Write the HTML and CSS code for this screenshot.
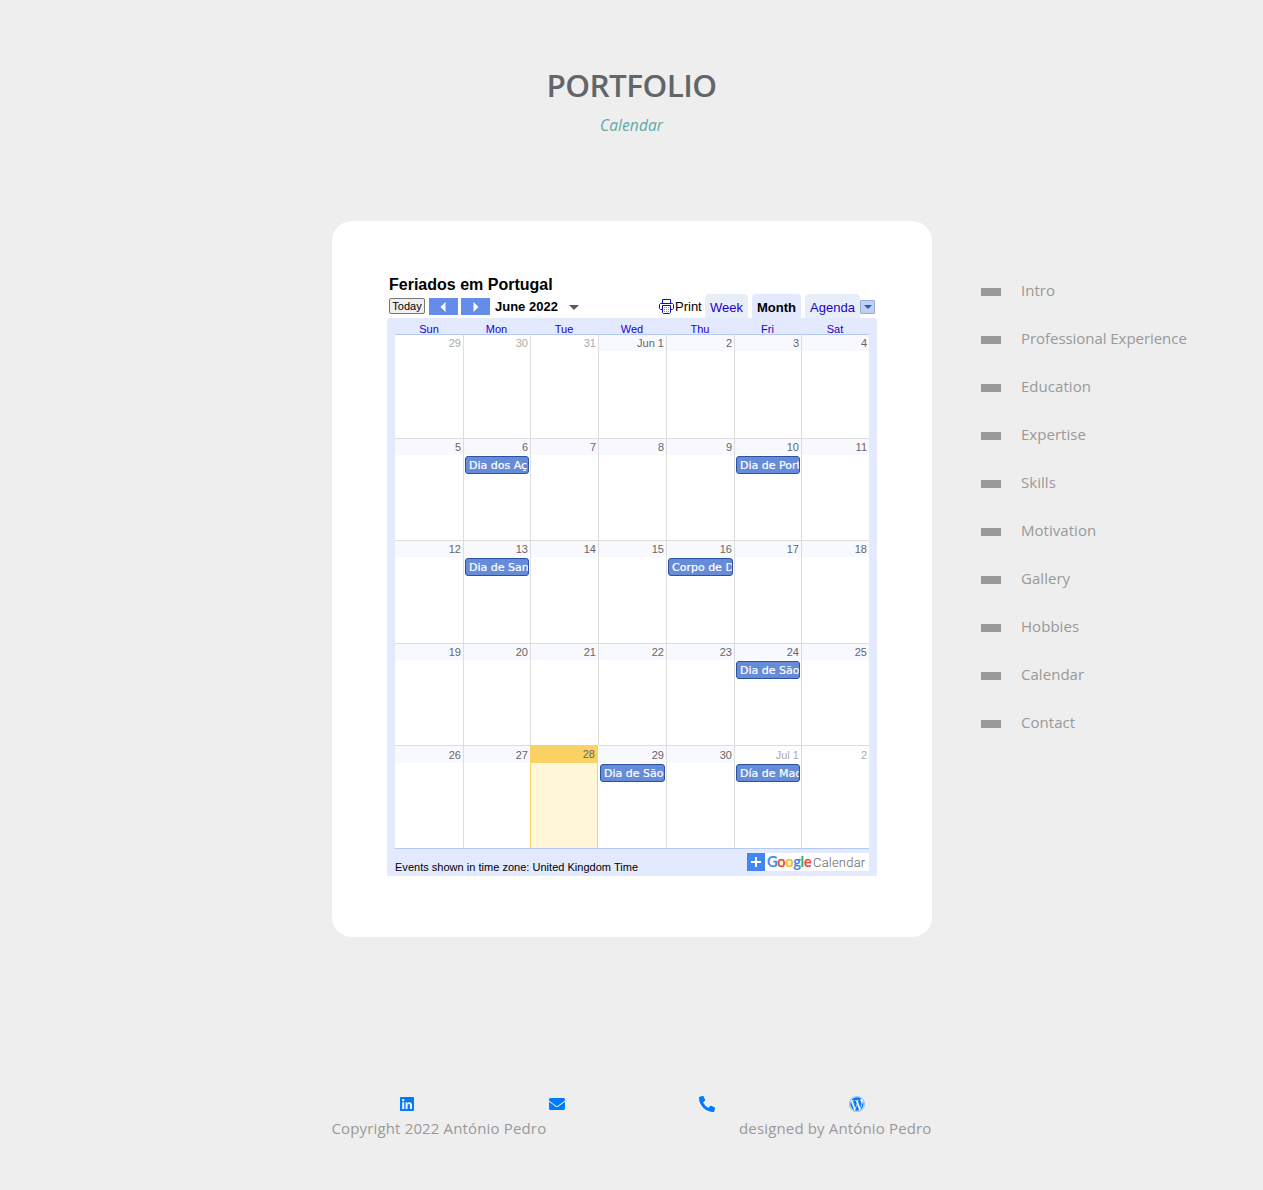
FILE: index.html
```html
<!DOCTYPE html>
<html lang="en">
<head>
<meta charset="utf-8">
<title>Portfolio - Calendar</title>
<link rel="stylesheet" href="styles.css">
</head>
<body>
<header class="heading">
  <h1>PORTFOLIO</h1>
  <p>Calendar</p>
</header>
<div class="page">
  <main class="card">
    <h2 class="cal-title">Feriados em Portugal</h2>
    <div class="toolbar">
      <button class="today-btn">Today</button>
      <span class="nav-btn"><svg width="6" height="10" viewBox="0 0 6 10"><path d="M5.5 0v10L.5 5z" fill="#fff"/></svg></span>
      <span class="nav-btn next"><svg width="6" height="10" viewBox="0 0 6 10"><path d="M.5 0v10l5-5z" fill="#fff"/></svg></span>
      <span class="month">June 2022</span>
      <svg class="caret" width="10" height="5" viewBox="0 0 10 5"><path d="M0 0h10L5 5z" fill="#595959"/></svg>
      <span class="print"><svg width="15" height="16" viewBox="0 0 15 16" fill="none" stroke="#1111b0"><path d="M3.500 4.500v-4h8v4M3 10.500H1.500l-1-1v-4l1-1h12l1 1v4l-1 1H12"/><path d="M3.500 6.500h8v7l-1 1h-6l-1-1z" fill="#fff"/><path d="M5 8.500h5M5 10.500h5M5 12.500h5" stroke="#8888bb" stroke-dasharray="1 1"/></svg>Print</span>
      <span class="tab week">Week</span>
      <span class="tab active">Month</span>
      <span class="tab agenda">Agenda</span>
      <span class="drop"><svg width="8" height="4" viewBox="0 0 8 4"><path d="M0 0h8L4 4z" fill="#2a56c6"/></svg></span>
    </div>
    <section class="calendar">
      <div class="grid days"><span>Sun</span><span>Mon</span><span>Tue</span><span>Wed</span><span>Thu</span><span>Fri</span><span>Sat</span></div>
      <div class="grid weeks">
        <div class="cell out"><b>29</b></div><div class="cell out"><b>30</b></div><div class="cell out"><b>31</b></div><div class="cell"><b>Jun 1</b></div><div class="cell"><b>2</b></div><div class="cell"><b>3</b></div><div class="cell"><b>4</b></div>
        <div class="cell"><b>5</b></div><div class="cell"><b>6</b><i>Dia dos Aç</i></div><div class="cell"><b>7</b></div><div class="cell"><b>8</b></div><div class="cell"><b>9</b></div><div class="cell"><b>10</b><i>Dia de Port</i></div><div class="cell"><b>11</b></div>
        <div class="cell"><b>12</b></div><div class="cell"><b>13</b><i>Dia de San</i></div><div class="cell"><b>14</b></div><div class="cell"><b>15</b></div><div class="cell"><b>16</b><i>Corpo de D</i></div><div class="cell"><b>17</b></div><div class="cell"><b>18</b></div>
        <div class="cell"><b>19</b></div><div class="cell"><b>20</b></div><div class="cell"><b>21</b></div><div class="cell"><b>22</b></div><div class="cell"><b>23</b></div><div class="cell"><b>24</b><i>Dia de São</i></div><div class="cell"><b>25</b></div>
        <div class="cell last"><b>26</b></div><div class="cell last"><b>27</b></div><div class="cell today"><b>28</b></div><div class="cell last after-today"><b>29</b><i>Dia de São</i></div><div class="cell last"><b>30</b></div><div class="cell last out"><b>Jul 1</b><i>Día de Mad</i></div><div class="cell last out"><b>2</b></div>
      </div>
      <div class="cal-foot">
        <span class="zone">Events shown in time zone: United Kingdom Time</span>
        <span class="badge"><svg width="18" height="18" viewBox="0 0 18 18"><path d="M0 0h18v18H0z" fill="#4285f4"/><path d="M9 4v10M4 9h10" stroke="#fff" stroke-width="2"/></svg><span class="google"><span class="g-blue">G</span><span class="g-red">o</span><span class="g-yellow">o</span><span class="g-blue">g</span><span class="g-green">l</span><span class="g-red">e</span></span><span class="product">Calendar</span></span>
      </div>
    </section>
  </main>
  <nav class="side">
    <a>Intro</a><a class="long">Professional Experience</a><a>Education</a><a>Expertise</a><a>Skills</a><a>Motivation</a><a>Gallery</a><a>Hobbies</a><a>Calendar</a><a>Contact</a>
  </nav>
</div>
<footer class="footer">
  <div class="icons">
    <span><svg width="14" height="16" viewBox="0 0 448 512"><path d="M416 32H31.900C14.300 32 0 46.500 0 64.300v383.400C0 465.500 14.300 480 31.900 480H416c17.600 0 32-14.500 32-32.300V64.300c0-17.800-14.400-32.300-32-32.300zM135.400 416H69V202.200h66.500V416zm-33.200-243c-21.300 0-38.500-17.300-38.500-38.500S80.900 96 102.200 96c21.200 0 38.500 17.300 38.500 38.500 0 21.300-17.200 38.500-38.500 38.500zm282.100 243h-66.400V312c0-24.800-.5-56.700-34.500-56.700-34.600 0-39.900 27-39.900 54.900V416h-66.400V202.200h63.700v29.200h.9c8.900-16.800 30.600-34.500 62.900-34.500 67.200 0 79.700 44.300 79.700 101.900V416z"/></svg></span>
    <span><svg width="16" height="16" viewBox="0 0 512 512"><path d="M502.300 190.800c3.900-3.100 9.700-.2 9.700 4.700V400c0 26.500-21.500 48-48 48H48c-26.500 0-48-21.500-48-48V195.600c0-5 5.700-7.800 9.700-4.700 22.400 17.400 52.100 39.500 154.100 113.600 21.100 15.400 56.700 47.800 92.200 47.600 35.700.3 72-32.800 92.300-47.600 102-74.100 131.600-96.300 154-113.700zM256 320c23.200.4 56.600-29.200 73.400-41.400 132.700-96.300 142.800-104.700 173.400-128.700 5.800-4.500 9.200-11.500 9.200-18.900v-19c0-26.500-21.500-48-48-48H48c-26.500 0-48 21.500-48 48v19c0 7.400 3.400 14.300 9.200 18.900 30.600 23.900 40.700 32.400 173.400 128.700 16.800 12.200 50.200 41.800 73.400 41.400z"/></svg></span>
    <span><svg width="16" height="16" viewBox="0 0 512 512"><path d="M497.390 361.800l-112-48a24 24 0 0 0-28 6.900l-49.600 60.600A370.660 370.660 0 0 1 130.600 204.110l60.600-49.600a23.940 23.940 0 0 0 6.900-28l-48-112A24.160 24.160 0 0 0 122.600.610l-104 24A24 24 0 0 0 0 48c0 256.500 207.900 464 464 464a24 24 0 0 0 23.400-18.600l24-104a24.290 24.290 0 0 0-14.010-27.600z"/></svg></span>
    <span><svg width="16" height="16" viewBox="0 0 512 512"><path d="M61.700 169.400l101.500 278C92.200 413 43.300 340.200 43.300 256c0-30.900 6.600-60.100 18.400-86.600zm337.900 75.900c0-26.300-9.400-44.500-17.500-58.700-10.800-17.500-20.900-32.400-20.900-49.900 0-19.600 14.800-37.800 35.700-37.800.9 0 1.800.1 2.800.2-37.900-34.700-88.300-55.900-143.700-55.900-74.300 0-139.700 38.100-177.800 95.900 5 .2 9.700.3 13.700.3 22.200 0 56.700-2.700 56.700-2.700 11.500-.7 12.800 16.200 1.400 17.500 0 0-11.500 1.300-24.300 2l77.500 230.400L249.800 247l-33.100-90.800c-11.500-.7-22.300-2-22.300-2-11.500-.7-10.100-18.200 1.300-17.500 0 0 35.100 2.700 56 2.700 22.200 0 56.700-2.700 56.700-2.700 11.500-.7 12.800 16.200 1.400 17.500 0 0-11.500 1.300-24.300 2l76.900 228.700 21.200-70.900c9-29.400 16-50.500 16-68.700zm-139.900 29.300l-63.800 185.500c19.100 5.600 39.200 8.700 60.100 8.700 24.800 0 48.500-4.300 70.600-12.100-.6-.9-1.100-1.900-1.500-2.900l-65.400-179.200zm183-120.700c.9 6.800 1.400 14 1.400 21.900 0 21.600-4 45.800-16.200 76.200l-65 187.900C426.200 403 468.700 334.500 468.700 256c0-37-9.400-71.800-26-102.100zM504 256c0 136.800-111.300 248-248 248C119.200 504 8 392.700 8 256 8 119.200 119.200 8 256 8c136.700 0 248 111.200 248 248zm-11.400 0c0-130.500-106.200-236.600-236.600-236.600C125.500 19.400 19.400 125.500 19.400 256S125.600 492.600 256 492.600c130.500 0 236.600-106.100 236.600-236.600z"/></svg></span>
  </div>
  <div class="credits"><span>Copyright 2022 António Pedro</span><span>designed by António Pedro</span></div>
</footer>
</body>
</html>
```
FILE: styles.css
```css
* { box-sizing: border-box; }
body {
  margin: 0;
  height: 1190px;
  overflow: hidden;
  background: #eee;
  color: #999;
  font: 15px/24px "Open Sans", "Noto Sans", sans-serif;
}
svg { display: block; flex: none; }
.heading { height: 221px; padding-top: 63px; text-align: center; }
.heading h1 { margin: 0; font-size: 31.500px; line-height: 43px; font-weight: 600; letter-spacing: -.6px; color: #636668; }
.heading p { margin: 7px 0 0; font-size: 15.500px; letter-spacing: .1px; font-style: italic; color: #5faaa9; }

.page { display: grid; grid-template-columns: 600px 1fr; column-gap: 49px; padding-left: 332px; align-items: start; }
.card {
  height: 716px;
  padding: 53px 55px 0;
  background: #fff;
  border-radius: 20px;
  color: #000;
  font-family: "Liberation Sans", Arial, sans-serif;
}
.cal-title { height: 20px; margin: 0 0 0 2px; font-size: 16px; line-height: 22px; font-weight: bold; }
.toolbar { display: flex; height: 24px; padding: 0 2px; font-size: 13px; line-height: 16px; }
.today-btn {
  width: 36px; height: 16px; margin-top: 4px; padding: 0;
  border: 1px solid #767676; border-radius: 2px; background: #efefef; color: #000;
  font: 11px/13px "Liberation Sans", Arial, sans-serif;
}
.nav-btn { display: flex; align-items: center; justify-content: center; width: 29px; height: 17px; margin: 4px 0 0 4px; background: #668cea; }
.nav-btn svg { margin-right: 2px; }
.nav-btn.next { margin-left: 3px; }
.nav-btn.next svg { margin: 0 0 0 1px; }
.month { margin: 5px 0 0 5px; width: 64px; font-weight: bold; white-space: nowrap; }
.caret { margin: 11px 0 0 10px; }
.print { display: flex; width: 46px; margin: 5px 0 0 auto; gap: 1px; }
.tab { height: 24px; padding-top: 6px; border-radius: 4px 4px 0 0; background: #e8eef7; color: #20c; text-align: center; }
.week { width: 43px; }
.active { width: 49px; margin: 0 4px; background: #e3e9ff; color: #000; font-weight: bold; }
.agenda { width: 55px; }
.drop { display: flex; align-items: center; justify-content: center; width: 15px; height: 14px; margin-top: 6px; border: 1px solid #92acdf; border-radius: 1px; background: #c3d1f0; }

.calendar { height: 558px; padding: 0 8px; background: #e3e9ff; border-radius: 3px 3px 2px 2px; }
.grid { display: grid; grid-template-columns: 68px 67px 68px 68px 68px 67px 68px; }
.days { height: 16px; padding-top: 3px; color: #20c; text-align: center; font-size: 11px; line-height: 16px; }
.weeks { grid-template-rows: 104px 102px 103px 102px 103px; background: #fff; border-bottom: 1px solid #b3caf8; }
.cell { min-width: 0; border-top: 1px solid #ddd; border-left: 1px solid #ddd; }
.cell:nth-child(7n + 1) { border-left: 0; }
.cell:nth-child(-n + 7) { border-top-color: #b3caf8; }
.cell b { display: block; height: 16px; padding-right: 2px; background: #f8f9ff; color: #666; text-align: right; font-size: 11px; font-weight: normal; line-height: 17px; }
.cell.out b { background: #fff; color: #aaa; }
.last b { height: 17px; line-height: 19px; }
.cell i {
  display: block; height: 18px; margin: 1px 1px 0; padding-left: 3px;
  overflow: hidden; white-space: nowrap;
  border: 1px solid #2952a3; border-radius: 3px; background: #668cd9; color: #fff;
  font: 11px/17px "DejaVu Sans", Verdana, sans-serif;
  -webkit-text-stroke: .2px #fff;
}
.cell.today { border-color: #fad163; border-right: 1px solid #fad163; background: #fff7d7; }
.cell.today b { height: 17px; background: #fad163; }
.cell.after-today { border-left-color: #fff; }
.cal-foot { display: flex; justify-content: space-between; padding-top: 4px; }
.zone { padding-top: 6px; font-size: 11px; line-height: 16px; letter-spacing: .02px; }
.badge { display: flex; width: 122px; height: 18px; background: #fff; line-height: 18px; }
.google { width: 46px; margin-left: 2px; font: 600 14.500px/18px Lato, sans-serif; letter-spacing: -.25px; -webkit-text-stroke: .2px; }
.g-blue { color: #4285f4; }
.g-red { color: #ea4335; }
.g-yellow { color: #fbbc05; }
.g-green { color: #34a853; }
.product { color: #666; font: 300 13px/19px Roboto, sans-serif; letter-spacing: .2px; }

.side { display: grid; grid-auto-rows: 48px; padding-top: 45px; }
.side a { display: flex; align-items: center; gap: 20px; line-height: 24px; letter-spacing: .04px; }
.side a.long { letter-spacing: -.05px; }
.side a::before { content: ""; width: 20px; height: 8px; margin-top: 3px; background: #999; }

.footer { width: 600px; margin: 155px 0 0 331.500px; }
.icons { display: grid; grid-template-columns: repeat(4, 1fr); height: 24px; align-items: center; justify-items: center; fill: #007bff; }
.credits { display: flex; justify-content: space-between; letter-spacing: .15px; }
```
